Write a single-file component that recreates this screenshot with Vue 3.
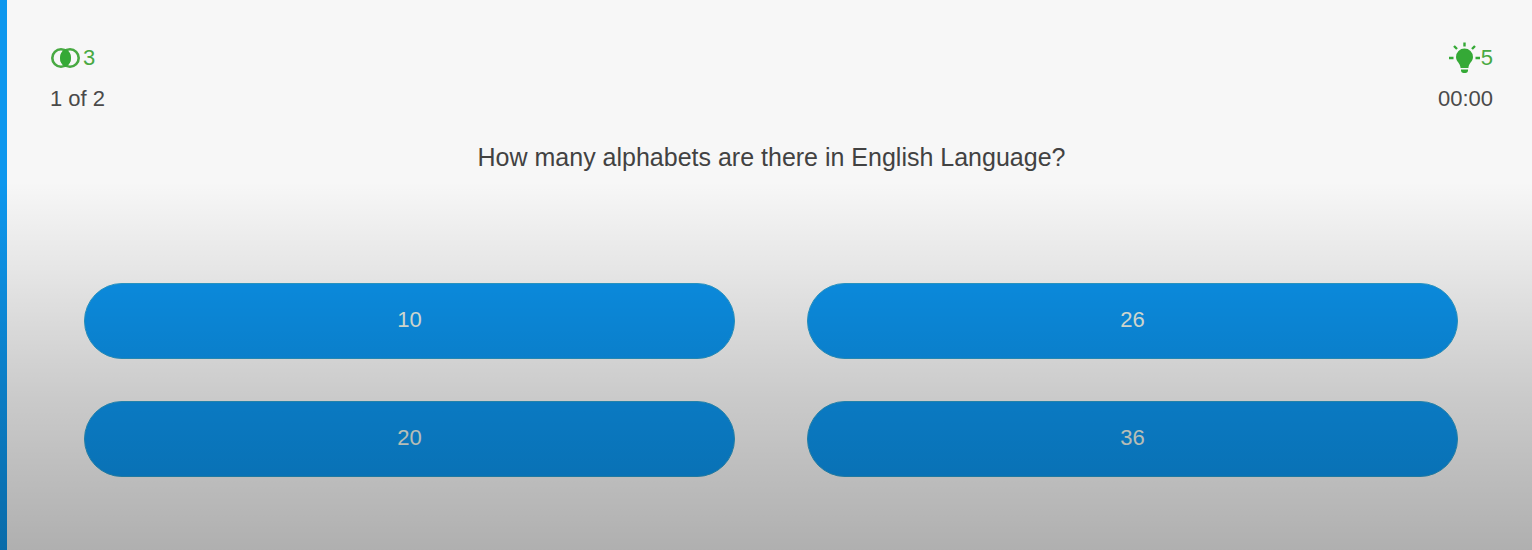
<script setup>
import { ref } from 'vue'

const answers = ['10', '26', '20', '36']
const selected = ref(null)
</script>

<template>
  <main class="quiz">
    <header class="status">
      <div class="group">
        <div class="counter">
          <svg class="coins" viewBox="0 0 29 20" aria-hidden="true">
            <circle cx="10" cy="10" r="8.7" />
            <circle cx="19" cy="10" r="8.7" />
            <path class="solid" d="M14.5 1.1A10 10 0 0 1 14.5 18.9A10 10 0 0 1 14.5 1.1Z" />
          </svg>
          <span>3</span>
        </div>
        <div class="detail">1 of 2</div>
      </div>
      <div class="group right">
        <div class="counter">
          <svg class="bulb" viewBox="0 0 33 32" aria-hidden="true">
            <path class="solid" d="M16.5 6.5A8.5 8.5 0 0 0 8 15C8 19.5 12.3 21 12.6 26H20.4C20.7 21 25 19.5 25 15A8.5 8.5 0 0 0 16.5 6.5Z" />
            <path class="solid" d="M13 27.5H20V29Q19.5 31 17.5 31H15.5Q13.5 31 13 29Z" />
            <path class="ray" d="M16.5 0.5V4.5M6 4L9 7M27 4L24 7M1 16H5.5M27.5 16H32" />
          </svg>
          <span>5</span>
        </div>
        <div class="detail">00:00</div>
      </div>
    </header>

    <h1>How many alphabets are there in English Language?</h1>

    <div class="answers">
      <button
        v-for="answer in answers"
        :key="answer"
        type="button"
        :aria-pressed="selected === answer"
        @click="selected = answer"
      >{{ answer }}</button>
    </div>
    <div class="shade"></div>
  </main>
</template>

<style>
body {
  margin: 0;
}
</style>

<style scoped>
.quiz {
  position: relative;
  box-sizing: border-box;
  min-height: 100vh;
  padding: 44px 39px 72px 43px;
  border-left: 7px solid #0d97ee;
  background: #f7f7f7;
  color: #4a4a4a;
  font-family: "Liberation Sans", Arial, sans-serif;
}

.status {
  display: flex;
  justify-content: space-between;
}

.group {
  display: flex;
  flex-direction: column;
  gap: 13px;
  font-size: 22px;
  line-height: 28px;
}

.right {
  align-items: flex-end;
}

.counter {
  display: flex;
  align-items: center;
  height: 28px;
  color: #48a942;
}

.coins {
  width: 29px;
  height: 20px;
  margin: 0 3px 0 1px;
  fill: none;
  stroke: currentColor;
  stroke-width: 2.6;
}

.bulb {
  width: 33px;
  height: 32px;
}

.solid {
  fill: #35a936;
  stroke: none;
}

.ray {
  fill: none;
  stroke: #35a936;
  stroke-width: 2.4;
}

h1 {
  margin: 30px 0 0;
  color: #424242;
  font-size: 25px;
  font-weight: 400;
  line-height: 28px;
  text-align: center;
}

.answers {
  display: grid;
  grid-template-columns: 1fr 1fr;
  gap: 42px 72px;
  margin: 112px 35px 0 34px;
}

button {
  height: 76px;
  padding: 0 0 2px;
  border: 1px solid #2b9fd0;
  border-radius: 38px;
  background: #0c95ee;
  color: #e8f0e6;
  font-family: inherit;
  font-size: 22px;
  cursor: pointer;
}

.shade {
  position: absolute;
  inset: 0 0 0 -7px;
  background: linear-gradient(
    transparent 33%,
    rgba(0, 0, 0, 0.07) 49%,
    rgba(0, 0, 0, 0.18) 72%,
    rgba(0, 0, 0, 0.29) 100%
  );
  pointer-events: none;
}
</style>
